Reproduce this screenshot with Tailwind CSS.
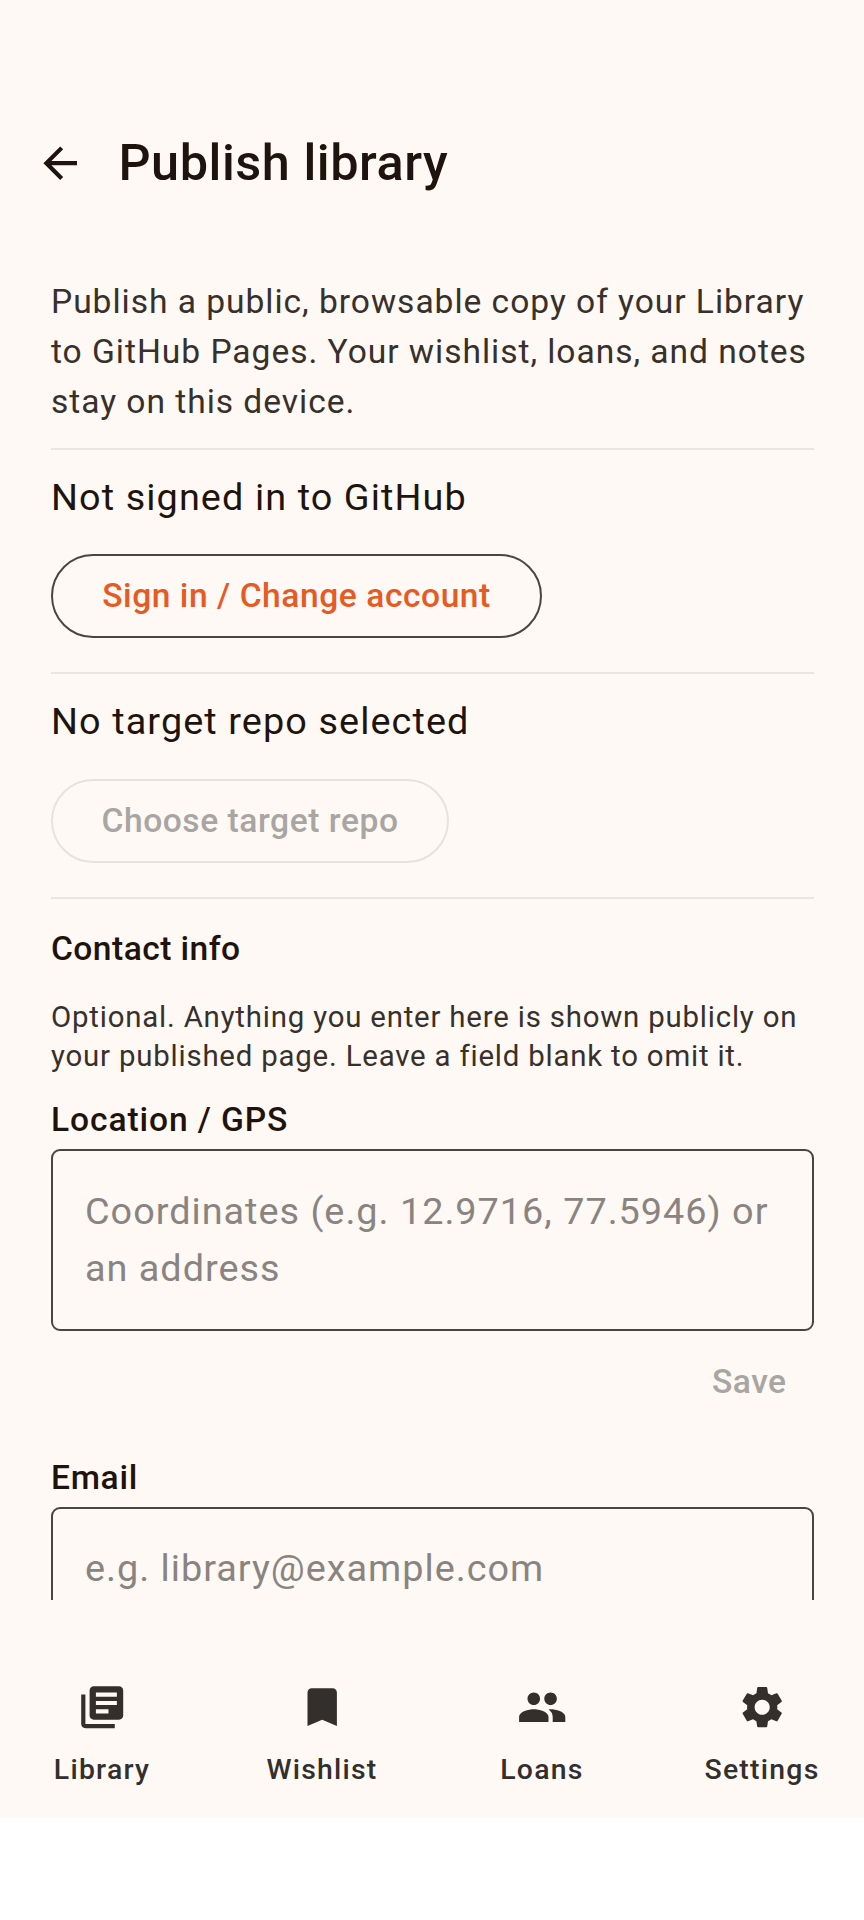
<!DOCTYPE html>
<html lang="en">
<head>
    <meta charset="UTF-8">
    <title>Publish library</title>
    <script src="https://cdn.jsdelivr.net/npm/@tailwindcss/browser@4"></script>
</head>
<body class="bg-white font-['Roboto',sans-serif]">
<div class="w-[864px] h-[1818px] bg-[#fff9f5] flex flex-col overflow-hidden">

    <!-- Top bar -->
    <div class="h-[126px] mt-[100px] shrink-0 flex items-center">
        <svg class="ml-[35px] w-[50.4px] h-[50.4px] text-[#1f140d]" viewBox="0 0 24 24" fill="currentColor"><path d="M20 11H7.83l5.59-5.59L12 4l-8 8 8 8 1.41-1.41L7.83 13H20v-2z"/></svg>
        <h1 class="ml-[33px] text-[50.4px] leading-[60px] tracking-[0.55px] font-medium text-[#1f140d]">Publish library</h1>
    </div>

    <!-- Scrolling content -->
    <div class="h-[1374px] shrink-0 overflow-hidden pl-[51px] pr-[50.4px] pt-[50.5px] flex flex-col">
        <p class="shrink-0 text-[33.6px] leading-[50.4px] tracking-[0.96px] text-[#37302b]">Publish a public, browsable copy of your Library to GitHub Pages. Your wishlist, loans, and notes stay on this device.</p>
        <div class="h-[2px] bg-[#e9e5e1] mt-[20px] shrink-0"></div>

        <p class="shrink-0 mt-[25.5px] text-[37.8px] leading-[44px] tracking-[1.1px] text-[#1f140d]">Not signed in to GitHub</p>
        <button class="shrink-0 mt-[35px] self-start h-[84px] w-[491px] rounded-full border-[2px] border-[#4a4541] text-[33.6px] tracking-[0.55px] font-medium text-[#e65a24]">Sign in / Change account</button>
        <div class="h-[2px] bg-[#e9e5e1] mt-[34px] shrink-0"></div>

        <p class="shrink-0 mt-[25px] text-[37.8px] leading-[44px] tracking-[1.1px] text-[#1f140d]">No target repo selected</p>
        <button class="shrink-0 mt-[36px] self-start h-[84px] w-[398px] rounded-full border-[2px] border-[#e6e3df] text-[33.6px] tracking-[0.55px] font-medium text-[#a9a5a2]">Choose target repo</button>
        <div class="h-[2px] bg-[#e9e5e1] mt-[34px] shrink-0"></div>

        <h2 class="shrink-0 mt-[28px] text-[33.6px] leading-[44px] tracking-[0.45px] font-medium text-[#1f140d]">Contact info</h2>
        <p class="shrink-0 mt-[27px] text-[29.4px] leading-[39px] tracking-[0.8px] text-[#37302b]">Optional. Anything you enter here is shown publicly on your published page. Leave a field blank to omit it.</p>

        <label class="shrink-0 mt-[21.5px] text-[33.6px] leading-[44px] tracking-[0.9px] font-medium text-[#1f140d]">Location / GPS</label>
        <div class="mt-[7px] h-[182px] shrink-0 rounded-[9px] border-[2px] border-[#4a4541] px-[32px] pt-[32px] text-[37.8px] leading-[57px] tracking-[1px] text-[#8a8481]">Coordinates (e.g. 12.9716, 77.5946) or an address</div>
        <div class="shrink-0 mt-[29px] flex justify-end pr-[27px] text-[33.6px] leading-[44px] tracking-[0.5px] font-medium text-[#a9a5a2]">Save</div>

        <label class="shrink-0 mt-[52px] text-[33.6px] leading-[44px] tracking-[0.7px] font-medium text-[#1f140d]">Email</label>
        <div class="mt-[7px] h-[200px] shrink-0 rounded-[9px] border-[2px] border-[#4a4541] px-[32px] pt-[31.5px] text-[37.8px] leading-[57px] tracking-[1px] text-[#8a8481]">e.g. library@example.com</div>
    </div>

    <!-- Bottom navigation -->
    <nav class="flex-1 grid grid-cols-[repeat(4,220px)] justify-center pt-[82px] text-[#322f2d]">
        <div class="flex flex-col items-center">
            <svg class="w-[50.4px] h-[50.4px]" viewBox="0 0 24 24" fill="currentColor"><path d="M4 6H2v14c0 1.1.9 2 2 2h14v-2H4V6zm16-4H8c-1.1 0-2 .9-2 2v12c0 1.1.9 2 2 2h12c1.1 0 2-.9 2-2V4c0-1.1-.9-2-2-2zm-1 9H9V9h10v2zm-4 4H9v-2h6v2zm4-8H9V5h10v2z"/></svg>
            <span class="mt-[18px] text-[28.4px] leading-[40px] font-medium tracking-[1.25px]">Library</span>
        </div>
        <div class="flex flex-col items-center">
            <svg class="w-[50.4px] h-[50.4px]" viewBox="0 0 24 24" fill="currentColor"><path d="M17 3H7c-1.1 0-2 .9-2 2v16l7-3 7 3V5c0-1.1-.9-2-2-2z"/></svg>
            <span class="mt-[18px] text-[28.4px] leading-[40px] font-medium tracking-[1.25px]">Wishlist</span>
        </div>
        <div class="flex flex-col items-center">
            <svg class="w-[50.4px] h-[50.4px]" viewBox="0 0 24 24" fill="currentColor"><path d="M16 11c1.66 0 2.99-1.34 2.99-3S17.66 5 16 5c-1.66 0-3 1.34-3 3s1.34 3 3 3zm-8 0c1.66 0 2.99-1.34 2.99-3S9.66 5 8 5C6.34 5 5 6.34 5 8s1.34 3 3 3zm0 2c-2.33 0-7 1.17-7 3.5V19h14v-2.5c0-2.33-4.67-3.5-7-3.5zm8 0c-.29 0-.62.02-.97.05 1.16.84 1.97 1.97 1.97 3.45V19h6v-2.5c0-2.33-4.67-3.5-7-3.5z"/></svg>
            <span class="mt-[18px] text-[28.4px] leading-[40px] font-medium tracking-[1.25px]">Loans</span>
        </div>
        <div class="flex flex-col items-center">
            <svg class="w-[50.4px] h-[50.4px]" viewBox="0 0 24 24" fill="currentColor"><path d="M19.14 12.94c.04-.3.06-.61.06-.94 0-.32-.02-.64-.07-.94l2.03-1.58c.18-.14.23-.41.12-.61l-1.92-3.32c-.12-.22-.37-.29-.59-.22l-2.39.96c-.5-.38-1.03-.7-1.62-.94l-.36-2.54c-.04-.24-.24-.41-.48-.41h-3.84c-.24 0-.43.17-.47.41l-.36 2.54c-.59.24-1.13.57-1.62.94l-2.39-.96c-.22-.08-.47 0-.59.22L2.74 8.87c-.12.21-.08.47.12.61l2.03 1.58c-.05.3-.09.63-.09.94s.02.64.07.94l-2.03 1.58c-.18.14-.23.41-.12.61l1.92 3.32c.12.22.37.29.59.22l2.39-.96c.5.38 1.03.7 1.62.94l.36 2.54c.05.24.24.41.48.41h3.84c.24 0 .44-.17.47-.41l.36-2.54c.59-.24 1.13-.56 1.62-.94l2.39.96c.22.08.47 0 .59-.22l1.92-3.32c.12-.22.07-.47-.12-.61l-2.01-1.58zM12 15.6c-1.98 0-3.6-1.62-3.6-3.6s1.62-3.6 3.6-3.6 3.6 1.62 3.6 3.6-1.62 3.6-3.6 3.6z"/></svg>
            <span class="mt-[18px] text-[28.4px] leading-[40px] font-medium tracking-[1.25px]">Settings</span>
        </div>
    </nav>
</div>
</body>
</html>
